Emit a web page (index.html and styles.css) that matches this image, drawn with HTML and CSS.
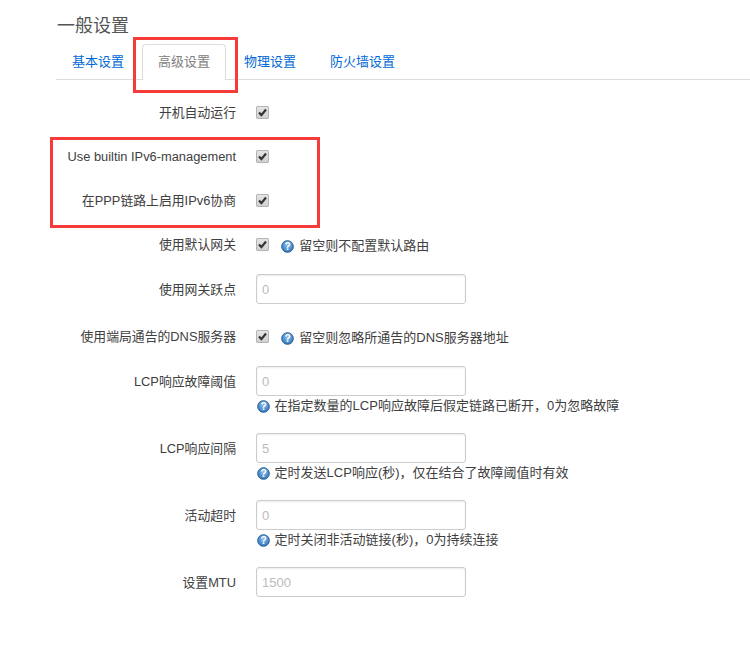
FILE: index.html
```html
<!DOCTYPE html>
<html lang="zh-CN">
<head>
    <meta charset="UTF-8">
    <meta name="viewport" content="width=device-width, initial-scale=1.0">
    <title>一般设置</title>
    <link rel="stylesheet" href="styles.css">
</head>
<body>
    <svg class="defs" width="0" height="0">
        <defs>
            <radialGradient id="helpFill" cx="50%" cy="40%" r="60%">
                <stop offset="0" stop-color="#8fc1ee"/>
                <stop offset="1" stop-color="#2f74b8"/>
            </radialGradient>
        </defs>
    </svg>
    <div class="section">
        <h3 class="section-title">一般设置</h3>
        <ul class="tabs">
            <li><a href="#">基本设置</a></li>
            <li class="active"><a href="#">高级设置</a></li>
            <li><a href="#">物理设置</a></li>
            <li><a href="#">防火墙设置</a></li>
        </ul>

        <div class="row">
            <label class="row-label">开机自动运行</label>
            <div class="row-field">
                <span class="check"><svg viewBox="0 0 13 13" width="13" height="13"><path d="M3 6.5l2.4 2.6L10 3.5" fill="none" stroke="#333" stroke-width="2.2"/></svg></span>
            </div>
        </div>
        <div class="row">
            <label class="row-label">Use builtin IPv6-management</label>
            <div class="row-field">
                <span class="check"><svg viewBox="0 0 13 13" width="13" height="13"><path d="M3 6.5l2.4 2.6L10 3.5" fill="none" stroke="#333" stroke-width="2.2"/></svg></span>
            </div>
        </div>
        <div class="row">
            <label class="row-label">在PPP链路上启用IPv6协商</label>
            <div class="row-field">
                <span class="check"><svg viewBox="0 0 13 13" width="13" height="13"><path d="M3 6.5l2.4 2.6L10 3.5" fill="none" stroke="#333" stroke-width="2.2"/></svg></span>
            </div>
        </div>
        <div class="row row-inline-help">
            <label class="row-label">使用默认网关</label>
            <div class="row-field">
                <span class="check"><svg viewBox="0 0 13 13" width="13" height="13"><path d="M3 6.5l2.4 2.6L10 3.5" fill="none" stroke="#333" stroke-width="2.2"/></svg></span>
                <span class="help inline">
                    <svg class="help-icon" viewBox="0 0 14 14" width="13" height="13"><circle cx="7" cy="7" r="6.3" fill="url(#helpFill)" stroke="#2a5e94"/><text x="7" y="11" text-anchor="middle" class="help-mark">?</text></svg>
                    留空则不配置默认路由
                </span>
            </div>
        </div>
        <div class="row row-gap">
            <label class="row-label">使用网关跃点</label>
            <div class="row-field">
                <input class="text-input" type="text" placeholder="0">
            </div>
        </div>
        <div class="row row-inline-help">
            <label class="row-label">使用端局通告的DNS服务器</label>
            <div class="row-field">
                <span class="check"><svg viewBox="0 0 13 13" width="13" height="13"><path d="M3 6.5l2.4 2.6L10 3.5" fill="none" stroke="#333" stroke-width="2.2"/></svg></span>
                <span class="help inline">
                    <svg class="help-icon" viewBox="0 0 14 14" width="13" height="13"><circle cx="7" cy="7" r="6.3" fill="url(#helpFill)" stroke="#2a5e94"/><text x="7" y="11" text-anchor="middle" class="help-mark">?</text></svg>
                    留空则忽略所通告的DNS服务器地址
                </span>
            </div>
        </div>
        <div class="row row-stacked">
            <label class="row-label">LCP响应故障阈值</label>
            <div class="row-field">
                <input class="text-input" type="text" placeholder="0">
                <div class="help">
                    <svg class="help-icon" viewBox="0 0 14 14" width="13" height="13"><circle cx="7" cy="7" r="6.3" fill="url(#helpFill)" stroke="#2a5e94"/><text x="7" y="11" text-anchor="middle" class="help-mark">?</text></svg>
                    在指定数量的LCP响应故障后假定链路已断开，0为忽略故障
                </div>
            </div>
        </div>
        <div class="row row-stacked">
            <label class="row-label">LCP响应间隔</label>
            <div class="row-field">
                <input class="text-input" type="text" placeholder="5">
                <div class="help">
                    <svg class="help-icon" viewBox="0 0 14 14" width="13" height="13"><circle cx="7" cy="7" r="6.3" fill="url(#helpFill)" stroke="#2a5e94"/><text x="7" y="11" text-anchor="middle" class="help-mark">?</text></svg>
                    定时发送LCP响应(秒)，仅在结合了故障阈值时有效
                </div>
            </div>
        </div>
        <div class="row row-stacked">
            <label class="row-label">活动超时</label>
            <div class="row-field">
                <input class="text-input" type="text" placeholder="0">
                <div class="help">
                    <svg class="help-icon" viewBox="0 0 14 14" width="13" height="13"><circle cx="7" cy="7" r="6.3" fill="url(#helpFill)" stroke="#2a5e94"/><text x="7" y="11" text-anchor="middle" class="help-mark">?</text></svg>
                    定时关闭非活动链接(秒)，0为持续连接
                </div>
            </div>
        </div>
        <div class="row">
            <label class="row-label">设置MTU</label>
            <div class="row-field">
                <input class="text-input" type="text" placeholder="1500">
            </div>
        </div>
    </div>

    <!-- 标注框 -->
    <div class="mark mark-tab"></div>
    <div class="mark mark-rows"></div>
</body>
</html>
```

FILE: styles.css
```css
body {
    margin: 0;
    background-color: #fff;
    color: #404040;
    font-family: "Liberation Sans", "Noto Sans CJK SC", sans-serif;
    font-size: 13px;
}
.defs {
    display: block;
    height: 0;
}
.section {
    padding: 15px 0 0 56px;
}
.section-title {
    margin: 0 0 0 1px;
    height: 24px;
    font-size: 18px;
    line-height: 22px;
    font-weight: normal;
    color: #555;
}
.tabs {
    display: flex;
    height: 35px;
    margin: 5px 0 17px;
    padding: 0;
    list-style: none;
    border-bottom: 1px solid #ddd;
}
.tabs li {
    margin-right: 3px;
}
.tabs li.active,
.tabs li.active + li {
    margin-right: 2px;
}
.tabs a {
    display: block;
    height: 34px;
    padding: 0 15px;
    line-height: 34px;
    color: #0069d6;
    text-decoration: none;
    border: 1px solid transparent;
    border-bottom: 0;
}
.tabs li:first-child a {
    padding-right: 14px;
}
.tabs .active a {
    height: 35px;
    color: #808080;
    background-color: #fff;
    border-color: #ddd;
    border-radius: 4px 4px 0 0;
}
.row {
    display: flex;
    margin-bottom: 14px;
    min-height: 30px;
}
.row-label {
    width: 180px;
    height: 30px;
    font-size: 12.85px;
    line-height: 32px;
    text-align: right;
}
.row-field {
    margin-left: 20px;
}
.row-inline-help {
    height: 31px;
}
.row-gap {
    margin-bottom: 17px;
}
.check {
    display: inline-block;
    width: 13px;
    height: 13px;
    margin-top: 9px;
    vertical-align: top;
    background: linear-gradient(#e6e6e6, #cfcfcf);
    border-radius: 2px;
    box-shadow: inset 0 0 0 1px #b4b4b4;
}
.check svg {
    display: block;
}
.text-input {
    display: block;
    box-sizing: border-box;
    width: 210px;
    height: 30px;
    padding: 5px;
    font: inherit;
    border: 1px solid #ccc;
    border-radius: 3px;
    box-shadow: inset 0 1px 2px rgba(0, 0, 0, 0.08);
}
.text-input::placeholder {
    color: #bbb;
}
.help {
    height: 23px;
    line-height: 19px;
    box-sizing: border-box;
    white-space: nowrap;
}
.help.inline {
    display: inline-block;
    height: 30px;
    margin-left: 7px;
    padding-top: 7px;
}
.help-icon {
    vertical-align: -3px;
    margin-left: 1px;
    margin-right: 1px;
}
.help.inline .help-icon {
    margin-right: 2px;
}
.help-mark {
    fill: #fff;
    font-size: 11px;
    font-weight: bold;
}
.mark {
    position: absolute;
    box-sizing: border-box;
    border: 3px solid #f73a3a;
}
.mark-tab {
    left: 133px;
    top: 37px;
    width: 105px;
    height: 56px;
}
.mark-rows {
    left: 50px;
    top: 137px;
    width: 270px;
    height: 91px;
}
```
